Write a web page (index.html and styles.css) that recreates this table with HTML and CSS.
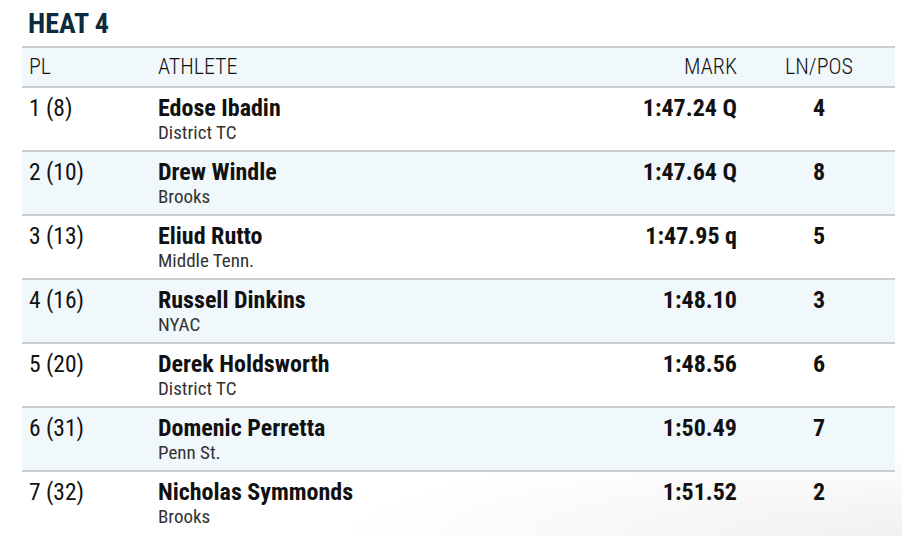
FILE: index.html
```html
<!DOCTYPE html>
<html lang="en">
<head>
<meta charset="utf-8">
<title>Heat 4</title>
<link rel="stylesheet" href="styles.css">
</head>
<body>
<main class="page">
  <h2 class="heat-title">HEAT 4</h2>
  <div class="results">
    <div class="row head">
      <div class="c-pl">PL</div>
      <div class="c-ath">ATHLETE</div>
      <div class="c-mark">MARK</div>
      <div class="c-ln">LN/POS</div>
    </div>
    <div class="row">
      <div class="c-pl">1 (8)</div>
      <div class="c-ath"><div class="name">Edose Ibadin</div><div class="team">District TC</div></div>
      <div class="c-mark">1:47.24 Q</div>
      <div class="c-ln">4</div>
    </div>
    <div class="row alt">
      <div class="c-pl">2 (10)</div>
      <div class="c-ath"><div class="name">Drew Windle</div><div class="team">Brooks</div></div>
      <div class="c-mark">1:47.64 Q</div>
      <div class="c-ln">8</div>
    </div>
    <div class="row">
      <div class="c-pl">3 (13)</div>
      <div class="c-ath"><div class="name">Eliud Rutto</div><div class="team">Middle Tenn.</div></div>
      <div class="c-mark">1:47.95 q</div>
      <div class="c-ln">5</div>
    </div>
    <div class="row alt">
      <div class="c-pl">4 (16)</div>
      <div class="c-ath"><div class="name">Russell Dinkins</div><div class="team">NYAC</div></div>
      <div class="c-mark">1:48.10</div>
      <div class="c-ln">3</div>
    </div>
    <div class="row">
      <div class="c-pl">5 (20)</div>
      <div class="c-ath"><div class="name">Derek Holdsworth</div><div class="team">District TC</div></div>
      <div class="c-mark">1:48.56</div>
      <div class="c-ln">6</div>
    </div>
    <div class="row alt">
      <div class="c-pl">6 (31)</div>
      <div class="c-ath"><div class="name">Domenic Perretta</div><div class="team">Penn St.</div></div>
      <div class="c-mark">1:50.49</div>
      <div class="c-ln">7</div>
    </div>
    <div class="row">
      <div class="c-pl">7 (32)</div>
      <div class="c-ath"><div class="name">Nicholas Symmonds</div><div class="team">Brooks</div></div>
      <div class="c-mark">1:51.52</div>
      <div class="c-ln">2</div>
    </div>
  </div>
</main>
</body>
</html>
```
FILE: styles.css
```css
html, body {
  margin: 0;
  height: 100%;
}
body {
  font-family: "Roboto Condensed", Roboto, sans-serif;
  color: #111;
  background: radial-gradient(ellipse 560px 90px at 100% 100%, #f1f1f1 0%, #f7f7f7 45%, #fff 100%);
  overflow: hidden;
}
.page {
  padding: 10px 7px 0 22px;
}
.heat-title {
  margin: 0 0 8px 6px;
  font-size: 28px;
  line-height: 28px;
  font-weight: 700;
  color: #0e2b3d;
}
.results {
  border-top: 2px solid #cdcdcd;
}
.row {
  display: grid;
  grid-template-columns: 136px 1fr 180px 152px;
  align-items: baseline;
  height: 64px;
  box-sizing: border-box;
  padding-top: 6px;
  border-bottom: 2px solid #cdcdcd;
}
.row.alt,
.row.head {
  background: #f1f8fc;
}
.row.head {
  height: 40px;
  padding-top: 0;
  padding-bottom: 1px;
  align-items: center;
  font-size: 22px;
  font-weight: 300;
  color: #111;
}
.c-pl {
  padding-left: 7px;
  font-size: 23.5px;
}
.head .c-pl {
  font-size: 22px;
}
.c-mark {
  text-align: right;
  padding-right: 6px;
  font-weight: 700;
  font-size: 24px;
}
.c-ln {
  text-align: center;
  font-weight: 700;
  font-size: 24px;
}
.head .c-mark,
.head .c-ln {
  font-weight: 300;
  font-size: 22px;
}
.name {
  font-weight: 700;
  font-size: 24px;
  line-height: 24px;
}
.team {
  font-size: 19px;
  line-height: 26px;
  color: #333;
}
.row:last-child {
  border-bottom: none;
}
.row:not(.alt):not(.head) {
  background: transparent;
}
```
